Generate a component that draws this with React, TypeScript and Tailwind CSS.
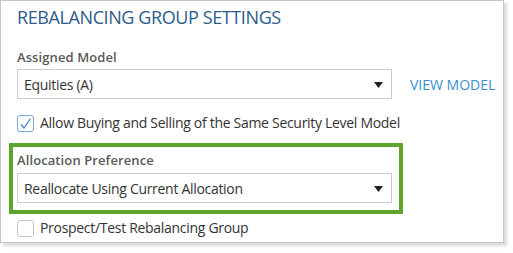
import { useState } from "react";

const selectBox =
  "flex items-center justify-between w-[375px] h-[30px] border border-[#cccccc] bg-white pl-[6px] pr-[8px] text-[14px] tracking-[-0.3px] text-[#333333]";

function Caret() {
  return (
    <svg width="9" height="6" viewBox="0 0 9 6" className="mt-[1px]">
      <path d="M0 0 L9 0 L4.5 6 Z" fill="#222222" />
    </svg>
  );
}

function CheckBox({ checked }: { checked: boolean }) {
  return (
    <div
      className={
        checked
          ? "flex items-center justify-center w-[17px] h-[17px] rounded-[3px] border border-[#7aa7d8] bg-white"
          : "w-[17px] h-[17px] rounded-[3px] border border-[#c4c4c4] bg-white"
      }
    >
      {checked && (
        <svg width="13" height="13" viewBox="0 0 13 13">
          <path
            d="M2 7.5 L5 11 L11.5 1.5"
            fill="none"
            stroke="#3d7cc9"
            strokeWidth="1.2"
          />
        </svg>
      )}
    </div>
  );
}

export default function App() {
  const [model] = useState("Equities (A)");
  const [preference] = useState("Reallocate Using Current Allocation");

  return (
    <div className="w-[513px] h-[253px] bg-white font-['Open_Sans',sans-serif]">
      <div className="flex flex-col w-[504px] h-[243px] border border-[#c6c6c6] bg-white shadow-[3px_3px_3px_rgba(0,0,0,0.15)] pl-[16px]">
        <h1 className="mt-[4px] text-[18px] leading-[24px] text-[#2d5b8a] tracking-[-0.4px]">
          REBALANCING GROUP SETTINGS
        </h1>

        <div className="mt-[19px] text-[13px] leading-[18px] font-semibold text-[#595959] tracking-[0.1px]">
          Assigned Model
        </div>
        <div className="flex items-center mt-[3px]">
          <div className={selectBox}>
            <span>{model}</span>
            <Caret />
          </div>
          <span className="ml-[18px] text-[14px] text-[#3b8fd0]">
            VIEW MODEL
          </span>
        </div>

        <div className="flex items-center gap-[6px] mt-[15px]">
          <CheckBox checked={true} />
          <span className="text-[14px] leading-[18px] tracking-[-0.3px] text-[#333333]">
            Allow Buying and Selling of the Same Security Level Model
          </span>
        </div>

        <div className="mt-[11px] -ml-[8px] w-[394px] h-[71px] border-[4px] border-[#5ea32b] pl-[4px] pt-[4px]">
          <div className="text-[13px] leading-[18px] font-semibold text-[#595959] tracking-[0.1px]">
            Allocation Preference
          </div>
          <div className={selectBox + " mt-[4px]"}>
            <span>{preference}</span>
            <Caret />
          </div>
        </div>

        <div className="flex items-center gap-[6px] mt-[5px]">
          <CheckBox checked={false} />
          <span className="text-[14px] leading-[18px] tracking-[-0.3px] text-[#333333]">
            Prospect/Test Rebalancing Group
          </span>
        </div>
      </div>
    </div>
  );
}
